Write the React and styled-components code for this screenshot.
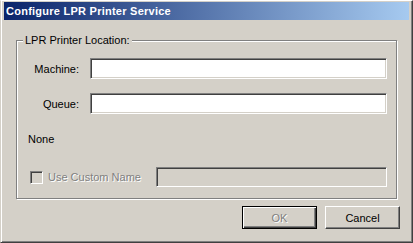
import React from "react";
import styled, { createGlobalStyle } from "styled-components";

const Global = createGlobalStyle`
 html, body {
  margin: 0;
  padding: 0;
  background: #d4d0c8;
 }
 * {
  box-sizing: border-box;
 }
`;

const Window = styled.div`
 width: 413px;
 height: 243px;
 display: flex;
 flex-direction: column;
 background: #d4d0c8;
 border-top: 1px solid #ffffff;
 border-left: 1px solid #d4d0c8;
 border-right: 1px solid #404040;
 border-bottom: 1px solid #404040;
 box-shadow: inset 1px 0 0 #ffffff, inset -1px -1px 0 #808080;
 padding: 1px 3px 3px 3px;
 font-family: "Liberation Sans", Arial, sans-serif;
 font-size: 11px;
 color: #000;
`;

const TitleBar = styled.div`
 height: 18px;
 flex: none;
 display: flex;
 align-items: center;
 padding-left: 2px;
 background: linear-gradient(to right, #0a246a, #a6caf0);
 color: #fff;
 font-weight: bold;
 font-size: 11px;
 letter-spacing: 0.25px;
`;

const Body = styled.div`
 flex: 1;
 display: flex;
 flex-direction: column;
 padding: 20px 9px 0 12px;
`;

const Group = styled.div`
 position: relative;
 height: 159px;
 margin-right: 3px;
 border: 1px solid #808080;
 box-shadow: 1px 1px 0 #ffffff, inset 1px 1px 0 #ffffff;
 padding: 17px 9px 0 0;
 display: flex;
 flex-direction: column;
`;

const Legend = styled.span`
 position: absolute;
 top: -7px;
 left: 6px;
 padding: 0 2px 0 2px;
 background: #d4d0c8;
 line-height: 13px;
`;

const FieldRow = styled.div`
 display: flex;
 align-items: center;
 height: 21px;
 margin-bottom: ${(p) => p.$gap || 0}px;
`;

const Label = styled.label`
 width: 62px;
 text-align: right;
 margin-right: 11px;
 flex: none;
`;

const Edit = styled.div`
 flex: 1;
 height: ${(p) => p.$h || 21}px;
 background: ${(p) => (p.$disabled ? "#d4d0c8" : "#ffffff")};
 border: 1px solid;
 border-color: #808080 #ffffff #ffffff #808080;
 box-shadow: inset 1px 1px 0 #404040, inset -1px -1px 0 #d4d0c8;
`;

const Note = styled.div`
 margin: 19px 0 0 11px;
 line-height: 13px;
`;

const CheckRow = styled.div`
 display: flex;
 align-items: center;
 height: 20px;
 margin-top: 21px;
 padding-left: 13px;
`;

const CheckBox = styled.span`
 width: 13px;
 height: 13px;
 flex: none;
 background: #d4d0c8;
 border: 1px solid;
 border-color: #808080 #ffffff #ffffff #808080;
 box-shadow: inset 1px 1px 0 #404040, inset -1px -1px 0 #d4d0c8;
 margin-right: 5px;
`;

const DisabledText = styled.span`
 color: #808080;
 text-shadow: 1px 1px 0 #ffffff;
`;

const CheckLabel = styled(DisabledText)`
 width: 108px;
 flex: none;
`;

const Buttons = styled.div`
 display: flex;
 justify-content: flex-end;
 gap: 8px;
 margin-top: 7px;
`;

const Button = styled.button`
 width: 75px;
 height: 23px;
 padding: 0;
 font-family: inherit;
 font-size: 11px;
 color: #000;
 background: #d4d0c8;
 border: 1px solid;
 border-color: ${(p) => (p.$default ? "#000 #000 #000 #000" : "#ffffff #404040 #404040 #ffffff")};
 box-shadow: ${(p) =>
  p.$default
   ? "inset 1px 1px 0 #ffffff, inset -1px -1px 0 #404040, inset -2px -2px 0 #808080"
   : "inset -1px -1px 0 #808080"};
`;

export default function App() {
 return (
  <>
   <Global />
   <Window>
    <TitleBar>Configure LPR Printer Service</TitleBar>
    <Body>
     <Group>
      <Legend>LPR Printer Location:</Legend>
      <FieldRow $gap={14}>
       <Label>Machine:</Label>
       <Edit />
      </FieldRow>
      <FieldRow>
       <Label>Queue:</Label>
       <Edit />
      </FieldRow>
      <Note>None</Note>
      <CheckRow>
       <CheckBox />
       <CheckLabel>Use Custom Name</CheckLabel>
       <Edit $h={20} $disabled />
      </CheckRow>
     </Group>
     <Buttons>
      <Button $default disabled>
       <DisabledText>OK</DisabledText>
      </Button>
      <Button>Cancel</Button>
     </Buttons>
    </Body>
   </Window>
  </>
 );
}
